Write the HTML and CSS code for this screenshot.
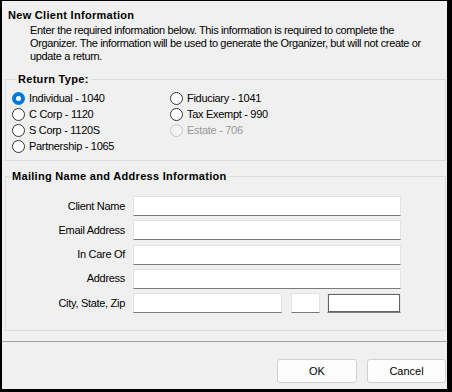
FILE: index.html
```html
<!DOCTYPE html>
<html lang="en">
<head>
  <meta charset="UTF-8" />
  <title>New Client Information</title>
  <link rel="stylesheet" href="styles.css">
</head>
<body>

  <div class="dialog">
    <div class="content">
      <h1 class="title">New Client Information</h1>
      <p class="intro">Enter the required information below. This information is required to complete the Organizer. The information will be used to generate the Organizer, but will not create or update a return.</p>

      <fieldset class="group">
        <legend>Return Type:</legend>
        <div class="radio-grid">
          <label class="radio"><input type="radio" name="rt" checked><span>Individual - 1040</span></label>
          <label class="radio"><input type="radio" name="rt"><span>C Corp - 1120</span></label>
          <label class="radio"><input type="radio" name="rt"><span>S Corp - 1120S</span></label>
          <label class="radio"><input type="radio" name="rt"><span>Partnership - 1065</span></label>
          <label class="radio"><input type="radio" name="rt"><span>Fiduciary - 1041</span></label>
          <label class="radio"><input type="radio" name="rt"><span>Tax Exempt - 990</span></label>
          <label class="radio disabled"><input type="radio" name="rt" disabled><span>Estate - 706</span></label>
        </div>
      </fieldset>

      <fieldset class="group mailing">
        <legend>Mailing Name and Address Information</legend>
        <div class="form-grid">
          <label>Client Name</label>
          <input type="text" class="field">
          <label>Email Address</label>
          <input type="text" class="field">
          <label>In Care Of</label>
          <input type="text" class="field">
          <label>Address</label>
          <input type="text" class="field">
          <label>City, State, Zip</label>
          <div class="csz">
            <input type="text" class="field city">
            <input type="text" class="field state">
            <input type="text" class="field zip">
          </div>
        </div>
      </fieldset>
    </div>

    <div class="footer">
      <button class="btn">OK</button>
      <button class="btn">Cancel</button>
    </div>
  </div>

</body>
</html>
```

FILE: styles.css
```css
* {
  margin: 0;
  padding: 0;
  box-sizing: border-box;
}

body {
  background: #000;
  padding: 1px 5px 3px 2px;
  font-family: 'Liberation Sans', Arial, sans-serif;
  font-size: 11px;
  line-height: 13px;
  letter-spacing: -0.3px;
  color: #000;
}

.dialog {
  background: #f0f0f0;
  height: 388px;
  display: flex;
  flex-direction: column;
}

.content {
  flex: 1;
  padding: 8px 1px 0 3px;
}

.title {
  font-size: 11px;
  font-weight: bold;
  letter-spacing: 0.3px;
  margin-left: 3px;
}

.intro {
  margin: 2px 8px 0 25px;
  letter-spacing: -0.36px;
}

.group {
  border: 1px solid #dcdcdc;
  margin-top: 10px;
  padding: 4px 6px 6px;
}

.group legend {
  font-weight: bold;
  letter-spacing: 0.3px;
  margin-left: 4px;
  padding: 0 2px;
}

.radio-grid {
  display: grid;
  grid-auto-flow: column;
  grid-template-rows: repeat(4, 16px);
  grid-template-columns: 158px auto;
}

.radio {
  display: flex;
  align-items: center;
  gap: 4px;
}

.radio input {
  appearance: none;
  width: 13px;
  height: 13px;
  border: 1px solid #333;
  border-radius: 50%;
  background: #fff;
  margin: 0;
}

.radio input:checked {
  background: #fff;
  border: 4px solid #0078d7;
}

.radio.disabled {
  color: #999;
}

.radio.disabled input {
  border-color: #c6c6c6;
  background: #f4f4f4;
}

.mailing {
  margin-top: 9px;
  padding: 13px 0 17px 0;
}

.form-grid {
  display: grid;
  grid-template-columns: 119px 268px;
  column-gap: 8px;
  row-gap: 4.25px;
  align-items: center;
}

.form-grid label {
  text-align: right;
}

.field {
  height: 20px;
  background: #fff;
  border: 1px solid #e3e3e3;
  border-bottom-color: #7a7a7a;
  font: inherit;
  outline: none;
}

.csz {
  display: flex;
}

.city {
  width: 149px;
}

.state {
  width: 29px;
  margin-left: 9px;
}

.zip {
  width: 74px;
  margin-left: 7px;
  box-shadow: inset 0 0 0 1px #646464;
}

.footer {
  border-top: 1px solid #a0a0a0;
  height: 48px;
  padding: 17px 1px 0 0;
  display: flex;
  justify-content: flex-end;
  align-items: flex-start;
  gap: 10px;
}

.btn {
  width: 80px;
  height: 24px;
  background: #fdfdfd;
  border: 1px solid #d0d0d0;
  border-radius: 3px;
  font: inherit;
  color: #000;
}

.btn + .btn {
  width: 79px;
}
```
